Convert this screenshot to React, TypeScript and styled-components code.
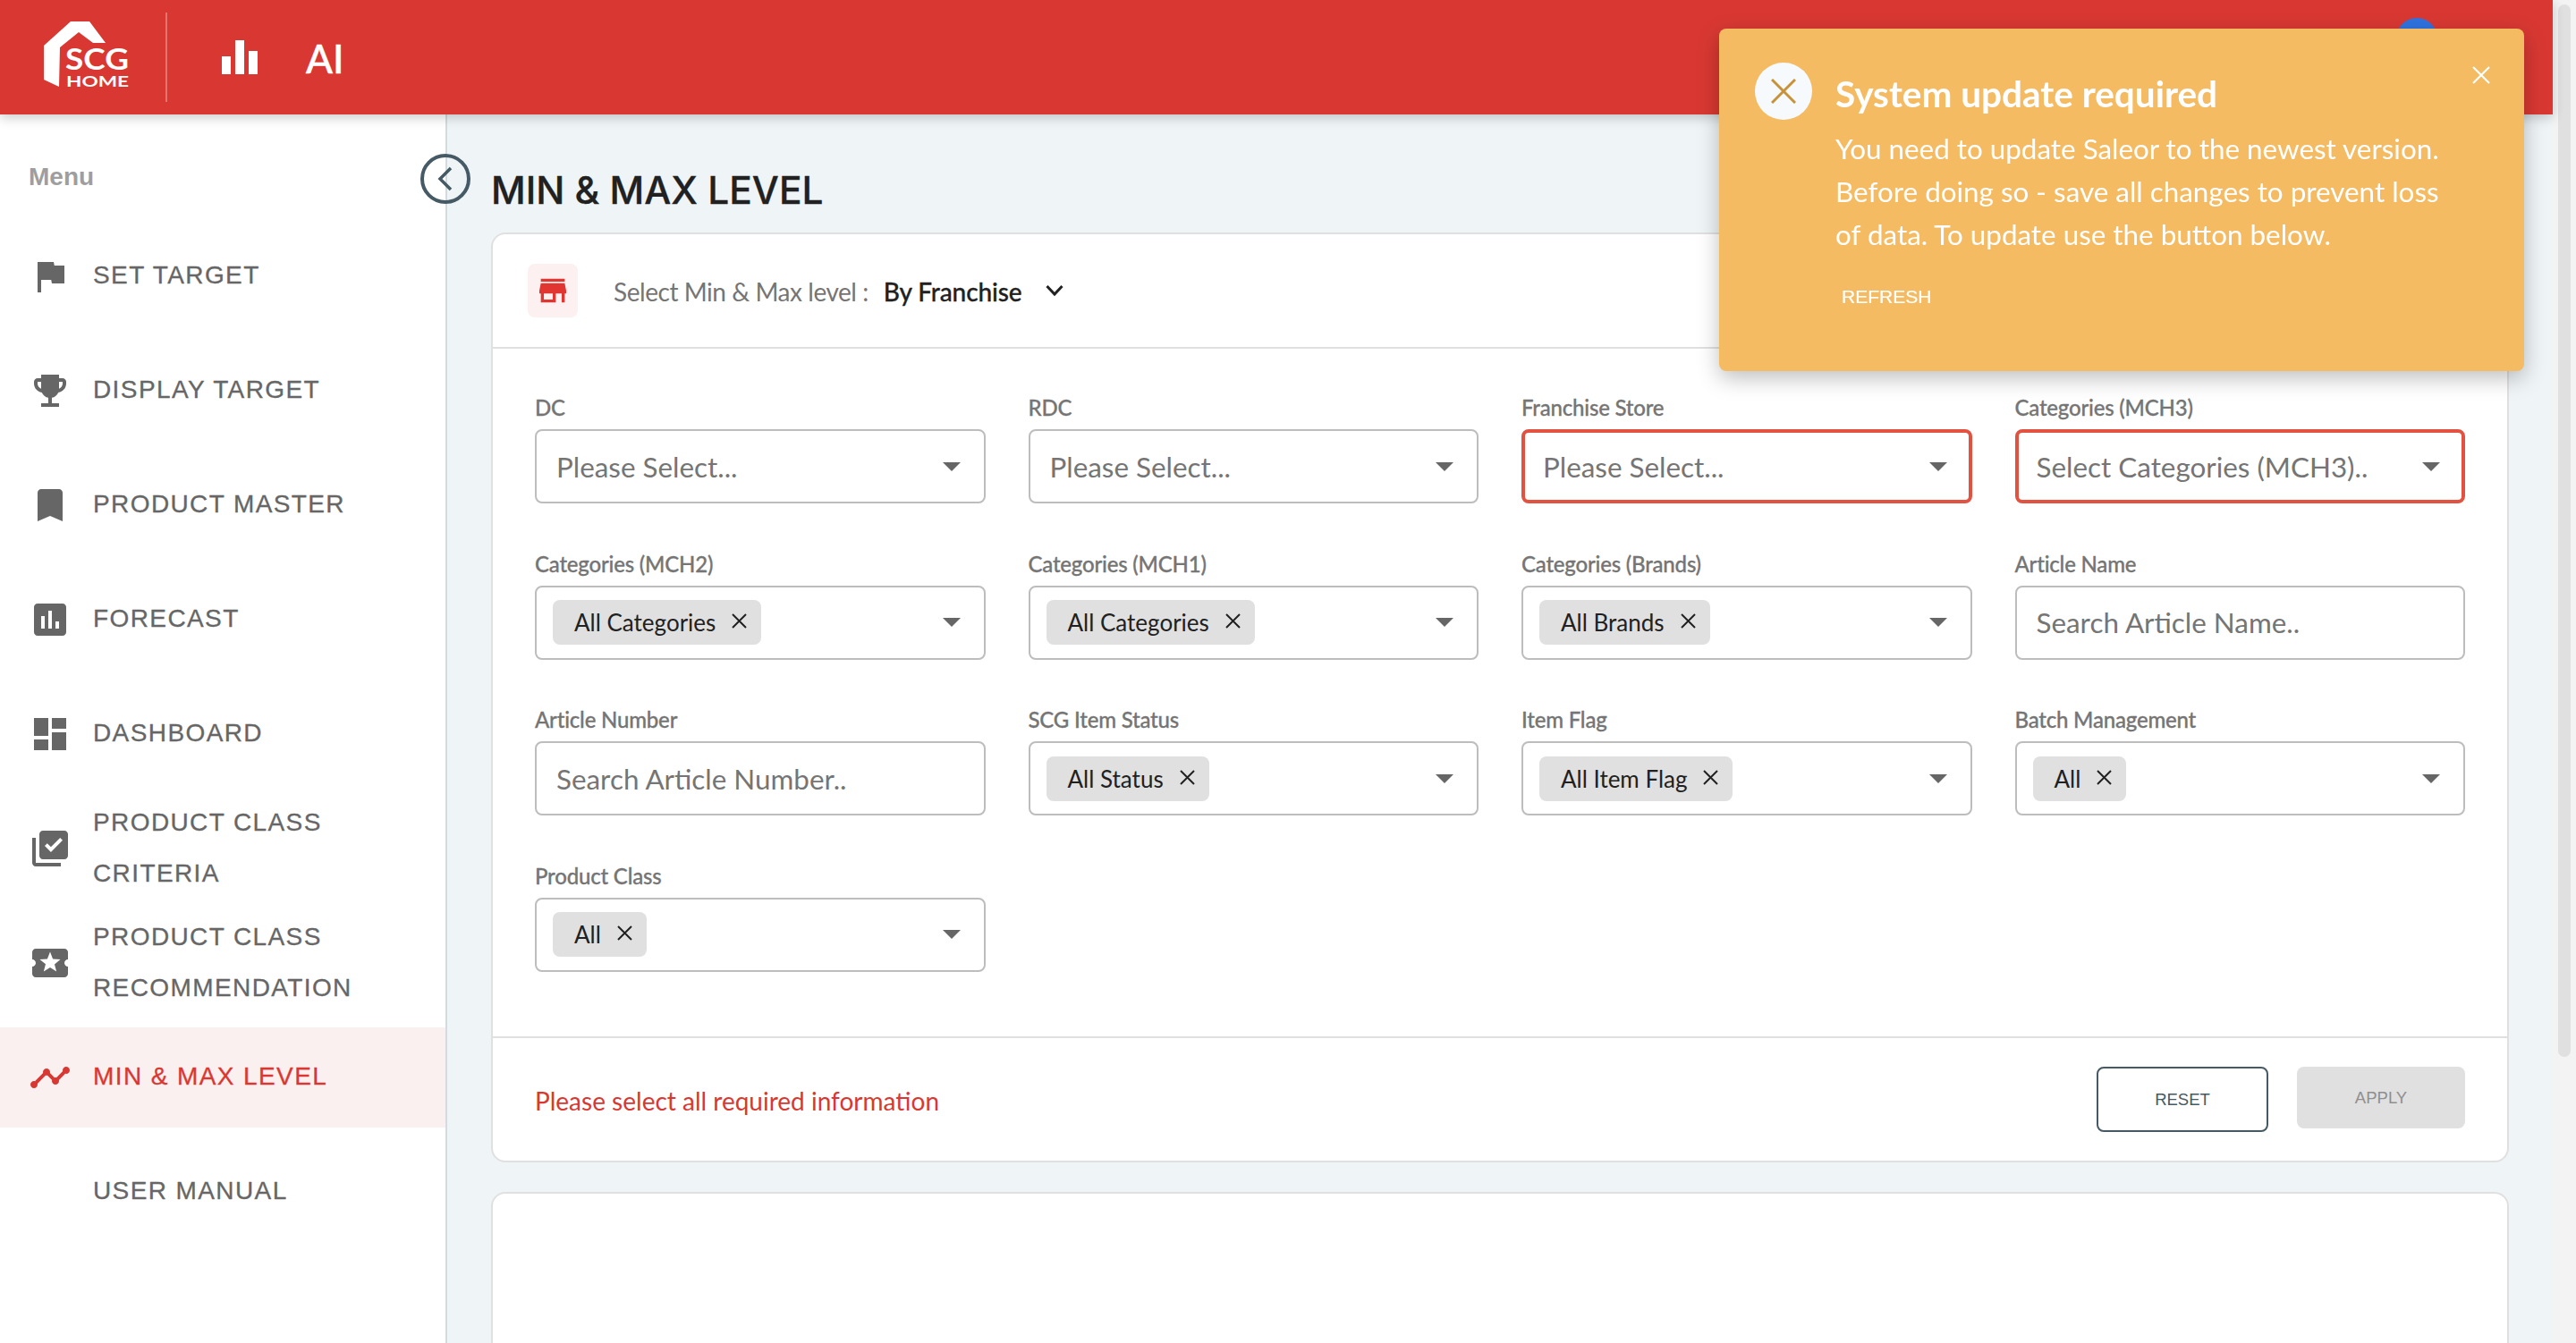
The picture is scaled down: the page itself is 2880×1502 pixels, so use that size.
import React from "react";
import styled, { createGlobalStyle } from "styled-components";

const GlobalStyle = createGlobalStyle`
  html, body { margin: 0; padding: 0; height: 100%; overflow: hidden; background: #f3f3f3; }
  #root { height: 100%; }
  * { box-sizing: border-box; }
`;

const BODY_FONT = `Lato, "Noto Sans", sans-serif`;
const MENU_FONT = `"Liberation Sans", Arial, sans-serif`;

const Page = styled.div`
  display: flex;
  height: 1502px;
  width: 2880px;
  overflow: hidden;
`;
const Shell = styled.div`
  width: 2854px;
  height: 100%;
  display: flex;
  flex-direction: column;
  background: #eff4f7;
`;
const ScrollTrack = styled.div`
  flex: 1;
  background: #f3f3f3;
  padding: 5px 6px 0;
`;
const ScrollThumb = styled.div`
  width: 14px;
  height: 1177px;
  border-radius: 7px;
  background: #e0e0e0;
`;
const Header = styled.header`
  flex: none;
  height: 128px;
  background: #d93832;
  box-shadow: 0 4px 12px rgba(0, 0, 0, 0.2);
  display: flex;
  align-items: center;
  padding: 0 129px 0 49px;
  position: relative;
  z-index: 2;
`;
const Logo = styled.svg`
  width: 95px;
  height: 80px;
  display: block;
  flex: none;
`;
const HeaderDivider = styled.div`
  width: 2px;
  height: 100px;
  background: rgba(255, 255, 255, 0.3);
  margin: 0 61px 0 41px;
  flex: none;
`;
const BarsIcon = styled.svg`
  width: 40px;
  height: 38px;
  flex: none;
  display: block;
  margin-right: 54px;
`;
const AiLabel = styled.span`
  font: 500 44px/1 ${BODY_FONT};
  color: #fff;
  margin-top: 2px;
  -webkit-text-stroke: 0.5px #fff;
`;
const Avatar = styled.div`
  margin-left: auto;
  align-self: flex-start;
  margin-top: 20px;
  width: 46px;
  height: 46px;
  border-radius: 50%;
  background: #2f73e0;
`;
const Body = styled.div`
  flex: 1;
  min-height: 0;
  display: flex;
  position: relative;
`;
const Sidebar = styled.nav`
  width: 500px;
  flex: none;
  background: #fff;
  border-right: 2px solid #d4dadd;
  padding-top: 49px;
`;
const MenuTitle = styled.div`
  font: 700 28px/42px ${MENU_FONT};
  color: #9e9e9e;
  padding-left: 32px;
  margin-bottom: 34px;
`;
const NavList = styled.div`
  display: flex;
  flex-direction: column;
  gap: 16px;
`;
const NavItem = styled.div<{ $active?: boolean }>`
  height: 112px;
  display: flex;
  align-items: center;
  gap: 24px;
  padding-left: 32px;
  background: ${(p) => (p.$active ? "#fbf0f0" : "transparent")};
  color: ${(p) => (p.$active ? "#d93832" : "#666666")};
`;
const NavIconBox = styled.svg`
  width: 48px;
  height: 48px;
  flex: none;
  fill: currentColor;
  display: block;
`;
const NavIconSpacer = styled.div`
  width: 48px;
  height: 48px;
  flex: none;
`;
const NavLabel = styled.div`
  font: 400 28px/57px ${MENU_FONT};
  letter-spacing: 1.4px;
  margin-top: -3px;
  -webkit-text-stroke: 0.3px currentColor;
`;
const CollapseButton = styled.div`
  position: absolute;
  left: 470px;
  top: 44px;
  width: 56px;
  height: 56px;
  border: 4px solid #455a64;
  border-radius: 50%;
  display: flex;
  align-items: center;
  justify-content: center;
`;
const Main = styled.main`
  flex: 1;
  min-width: 0;
  padding: 58px 49px 0 49px;
`;
const Title = styled.h1`
  margin: 0 0 22px;
  height: 52px;
  font: 500 42.4px/54px Inter, "Noto Sans", sans-serif;
  color: #212121;
  -webkit-text-stroke: 0.3px #212121;
`;
const Card = styled.section`
  background: #fff;
  border: 2px solid #e0e0e0;
  border-radius: 16px;
`;
const EmptyCard = styled(Card)`
  margin-top: 33px;
  height: 400px;
`;
const CardHead = styled.div`
  height: 128px;
  display: flex;
  align-items: center;
  padding-left: 39px;
  border-bottom: 2px solid #e0e0e0;
`;
const StoreBadge = styled.div`
  width: 56px;
  height: 60px;
  border-radius: 8px;
  background: #fcf0f0;
  color: #e03530;
  display: flex;
  align-items: center;
  justify-content: center;
  margin-right: 40px;
`;
const StoreIcon = styled.svg`
  width: 40px;
  height: 40px;
  fill: currentColor;
  display: block;
`;
const ModeLabel = styled.span`
  font: 400 28px/40px ${BODY_FONT};
  letter-spacing: -0.45px;
  color: #757575;
  margin: 2px 17px 0 0;
`;
const ModeValue = styled.span`
  font: 500 28px/40px ${BODY_FONT};
  letter-spacing: -0.1px;
  color: #212121;
  margin: 2px 26px 0 0;
  -webkit-text-stroke: 0.3px #212121;
`;
const FormGrid = styled.div`
  display: grid;
  grid-template-columns: repeat(4, 503.5px);
  column-gap: 48px;
  row-gap: 49.5px;
  padding: 48px 47px 72px;
`;
const Field = styled.div`
  display: flex;
  flex-direction: column;
`;
const FieldLabel = styled.label`
  font: 500 24px/36px ${BODY_FONT};
  letter-spacing: -0.2px;
  color: #757575;
  margin-bottom: 6px;
  -webkit-text-stroke: 0.3px #757575;
`;
const Control = styled.div<{ $error?: boolean }>`
  height: 83px;
  border-radius: 8px;
  border: ${(p) => (p.$error ? "4px solid #e35141" : "2px solid #bdbdbd")};
  padding-left: ${(p) => (p.$error ? "20px" : "22px")};
  padding-right: ${(p) => (p.$error ? "24px" : "26px")};
  display: flex;
  align-items: center;
  justify-content: space-between;
  background: #fff;
`;
const TagControl = styled(Control)`
  padding-left: 18px;
`;
const Placeholder = styled.span`
  font: 400 31.4px/40px ${BODY_FONT};
  color: #757575;
`;
const SearchInput = styled.input`
  width: 100%;
  height: 100%;
  border: 0;
  outline: 0;
  padding: 0;
  background: transparent;
  font: 400 31.4px/40px ${BODY_FONT};
  color: #757575;
  &::placeholder { color: #757575; opacity: 1; }
`;
const Caret = styled.div`
  width: 0;
  height: 0;
  flex: none;
  border-left: 10px solid transparent;
  border-right: 10px solid transparent;
  border-top: 10px solid #666666;
`;
const Tag = styled.div`
  height: 50px;
  display: flex;
  align-items: center;
  gap: 18px;
  padding: 0 16px 0 24px;
  background: #e0e0e0;
  border-radius: 8px;
  font: 400 26px/50px ${BODY_FONT};
  color: #212121;
`;
const TagClose = styled.svg`
  width: 17px;
  height: 17px;
  display: block;
  margin-top: -3px;
`;
const CardFoot = styled.div`
  border-top: 2px solid #e0e0e0;
  height: 139px;
  padding: 32px 47px 0;
  display: flex;
  align-items: flex-start;
  justify-content: space-between;
`;
const ErrorText = styled.div`
  font: 400 28px/40px ${BODY_FONT};
  color: #d93832;
  margin-top: 18px;
`;
const Actions = styled.div`
  display: flex;
  align-items: flex-start;
  gap: 32px;
`;
const ResetButton = styled.button`
  width: 192px;
  height: 73px;
  background: #fff;
  border: 2px solid #455a64;
  border-radius: 8px;
  font: 400 18.5px/1 ${MENU_FONT};
  color: #455a64;
  padding: 2px 0 0;
`;
const ApplyButton = styled.button`
  width: 188px;
  height: 69px;
  background: #e0e0e0;
  border: 0;
  border-radius: 8px;
  font: 400 18.5px/1 ${MENU_FONT};
  color: #8f8f8f;
  padding: 2px 0 0;
`;
const Toast = styled.aside`
  position: fixed;
  left: 1922px;
  top: 32px;
  width: 900px;
  height: 383px;
  z-index: 5;
  background: #f4bb62;
  border-radius: 8px;
  box-shadow: 0 8px 24px rgba(0, 0, 0, 0.25);
  display: flex;
  gap: 26px;
  padding: 38px 0 0 40px;
  color: #fff;
`;
const ToastIcon = styled.div`
  width: 64px;
  height: 64px;
  flex: none;
  border-radius: 50%;
  background: #f7fafc;
  display: flex;
  align-items: center;
  justify-content: center;
`;
const ToastContent = styled.div`
  padding-top: 11px;
`;
const ToastTitle = styled.div`
  font: 700 40.5px/48px ${BODY_FONT};
  margin-bottom: 13px;
`;
const ToastText = styled.div`
  font: 400 31.4px/48px ${BODY_FONT};
  width: 720px;
`;
const RefreshLink = styled.div`
  font: 400 21px/30px ${MENU_FONT};
  margin: 31px 0 0 7px;
  -webkit-text-stroke: 0.2px #fff;
`;
const ToastClose = styled.svg`
  position: absolute;
  right: 38px;
  top: 42px;
  width: 20px;
  height: 20px;
  display: block;
`;

const navItems = [
  { label: ["SET TARGET"], d: "M14.4 6L14 4H5v17h2v-7h5.6l.4 2h7V6z" },
  { label: ["DISPLAY TARGET"], d: "M19 5h-2V3H7v2H5c-1.1 0-2 .9-2 2v1c0 2.55 1.92 4.63 4.39 4.94.63 1.5 1.98 2.63 3.61 2.96V19H7v2h10v-2h-4v-3.1c1.63-.33 2.98-1.46 3.61-2.96C19.08 12.63 21 10.55 21 8V7c0-1.1-.9-2-2-2zM5 8V7h2v3.82C5.84 10.4 5 9.3 5 8zm14 0c0 1.3-.84 2.4-2 2.82V7h2v1z" },
  { label: ["PRODUCT MASTER"], d: "M17 3H7c-1.1 0-1.99.9-1.99 2L5 21l7-3 7 3V5c0-1.1-.9-2-2-2z" },
  { label: ["FORECAST"], d: "M19 3H5c-1.1 0-2 .9-2 2v14c0 1.1.9 2 2 2h14c1.1 0 2-.9 2-2V5c0-1.1-.9-2-2-2zM9 17H7v-7h2v7zm4 0h-2V7h2v10zm4 0h-2v-4h2v4z" },
  { label: ["DASHBOARD"], d: "M3 13h8V3H3v10zm0 8h8v-6H3v6zm10 0h8V11h-8v10zm0-18v6h8V3h-8z" },
  { label: ["PRODUCT CLASS", "CRITERIA"], d: "M4 6H2v14c0 1.1.9 2 2 2h14v-2H4V6zm16-4H8c-1.1 0-2 .9-2 2v12c0 1.1.9 2 2 2h12c1.1 0 2-.9 2-2V4c0-1.1-.9-2-2-2zm-7.53 12L9 10.5l1.4-1.41 2.07 2.08L17.6 6 19 7.41 12.47 14z" },
  { label: ["PRODUCT CLASS", "RECOMMENDATION"], d: "M20 12c0-1.1.9-2 2-2V6c0-1.1-.9-2-2-2H4c-1.1 0-1.99.9-1.99 2v4c1.1 0 1.99.9 1.99 2s-.89 2-2 2v4c0 1.1.9 2 2 2h16c1.1 0 2-.9 2-2v-4c-1.1 0-2-.9-2-2zm-4.42 4.8L12 14.5l-3.58 2.3 1.08-4.12-3.29-2.69 4.24-.25L12 5.8l1.54 3.95 4.24.25-3.29 2.69 1.09 4.11z" },
  { label: ["MIN & MAX LEVEL"], active: true, d: "M23 8c0 1.1-.9 2-2 2-.18 0-.35-.02-.51-.07l-3.56 3.55c.05.16.07.34.07.52 0 1.1-.9 2-2 2s-2-.9-2-2c0-.18.02-.36.07-.52l-2.55-2.55c-.16.05-.34.07-.52.07s-.36-.02-.52-.07l-4.55 4.56c.05.16.07.33.07.51 0 1.1-.9 2-2 2s-2-.9-2-2 .9-2 2-2c.18 0 .35.02.51.07l4.56-4.55C8.02 9.36 8 9.18 8 9c0-1.1.9-2 2-2s2 .9 2 2c0 .18-.02.36-.07.52l2.55 2.55c.16-.05.34-.07.52-.07s.36.02.52.07l3.55-3.56C19.02 8.35 19 8.18 19 8c0-1.1.9-2 2-2s2 .9 2 2z" },
  { label: ["USER MANUAL"] },
];

type FieldDef = { label: string; placeholder?: string; tag?: string; search?: string; error?: boolean };
const fields: FieldDef[] = [
  { label: "DC", placeholder: "Please Select..." },
  { label: "RDC", placeholder: "Please Select..." },
  { label: "Franchise Store", placeholder: "Please Select...", error: true },
  { label: "Categories (MCH3)", placeholder: "Select Categories (MCH3)..", error: true },
  { label: "Categories (MCH2)", tag: "All Categories" },
  { label: "Categories (MCH1)", tag: "All Categories" },
  { label: "Categories (Brands)", tag: "All Brands" },
  { label: "Article Name", search: "Search Article Name.." },
  { label: "Article Number", search: "Search Article Number.." },
  { label: "SCG Item Status", tag: "All Status" },
  { label: "Item Flag", tag: "All Item Flag" },
  { label: "Batch Management", tag: "All" },
  { label: "Product Class", tag: "All" },
];

function FieldControl({ f }: { f: FieldDef }) {
  if (f.search) {
    return (
      <Control>
        <SearchInput placeholder={f.search} readOnly />
      </Control>
    );
  }
  if (f.tag) {
    return (
      <TagControl>
        <Tag>
          {f.tag}
          <TagClose viewBox="0 0 17 17">
            <path d="M1 1L16 16M16 1L1 16" stroke="#212121" strokeWidth="2" fill="none" />
          </TagClose>
        </Tag>
        <Caret />
      </TagControl>
    );
  }
  return (
    <Control $error={f.error}>
      <Placeholder>{f.placeholder}</Placeholder>
      <Caret />
    </Control>
  );
}

export default function App() {
  return (
    <>
      <GlobalStyle />
      <Page>
        <Shell>
          <Header>
            <Logo viewBox="0 0 95 80">
              <polygon points="0,27 30,0 51,0 69,24 55,24 39,12 18,29 17,73 0,65" fill="#fff" />
              <text x="24" y="54" fill="#fff" fontFamily="Lato, sans-serif" fontSize="33" fontWeight="700" textLength="71" lengthAdjust="spacingAndGlyphs">SCG</text>
              <text x="25" y="73" fill="#fff" fontFamily="Lato, sans-serif" fontSize="17" fontWeight="700" textLength="70" lengthAdjust="spacingAndGlyphs">HOME</text>
            </Logo>
            <HeaderDivider />
            <BarsIcon viewBox="0 0 40 38">
              <path d="M0 18h10v20H0zM15 0h10v38H15zM30 12h10v26H30z" fill="#fff" />
            </BarsIcon>
            <AiLabel>AI</AiLabel>
            <Avatar />
          </Header>
          <Body>
            <Sidebar>
              <MenuTitle>Menu</MenuTitle>
              <NavList>
                {navItems.map((item) => (
                  <NavItem key={item.label.join(" ")} $active={item.active}>
                    {item.d ? (
                      <NavIconBox viewBox="0 0 24 24">
                        <path d={item.d} />
                      </NavIconBox>
                    ) : (
                      <NavIconSpacer />
                    )}
                    <NavLabel>
                      {item.label.map((l) => (
                        <div key={l}>{l}</div>
                      ))}
                    </NavLabel>
                  </NavItem>
                ))}
              </NavList>
            </Sidebar>
            <CollapseButton>
              <svg width="18" height="28" viewBox="0 0 18 28">
                <path d="M15 2L3 14L15 26" stroke="#455a64" strokeWidth="3.5" fill="none" />
              </svg>
            </CollapseButton>
            <Main>
              <Title>MIN &amp; MAX LEVEL</Title>
              <Card>
                <CardHead>
                  <StoreBadge>
                    <StoreIcon viewBox="0 0 24 24">
                      <path d="M20 4H4v2h16V4zm1 10v-2l-1-5H4l-1 5v2h1v6h10v-6h4v6h2v-6h1zm-9 4H6v-4h6v4z" />
                    </StoreIcon>
                  </StoreBadge>
                  <ModeLabel>Select Min &amp; Max level :</ModeLabel>
                  <ModeValue>By Franchise</ModeValue>
                  <svg width="20" height="14" viewBox="0 0 20 14">
                    <path d="M1.5 2L10 11L18.5 2" stroke="#212121" strokeWidth="3" fill="none" />
                  </svg>
                </CardHead>
                <FormGrid>
                  {fields.map((f) => (
                    <Field key={f.label}>
                      <FieldLabel>{f.label}</FieldLabel>
                      <FieldControl f={f} />
                    </Field>
                  ))}
                </FormGrid>
                <CardFoot>
                  <ErrorText>Please select all required information</ErrorText>
                  <Actions>
                    <ResetButton>RESET</ResetButton>
                    <ApplyButton>APPLY</ApplyButton>
                  </Actions>
                </CardFoot>
              </Card>
              <EmptyCard />
            </Main>
          </Body>
        </Shell>
        <ScrollTrack>
          <ScrollThumb />
        </ScrollTrack>
      </Page>
      <Toast>
        <ToastIcon>
          <svg width="28" height="28" viewBox="0 0 28 28">
            <path d="M1 1L27 27M27 1L1 27" stroke="#c8923a" strokeWidth="3" fill="none" />
          </svg>
        </ToastIcon>
        <ToastContent>
          <ToastTitle>System update required</ToastTitle>
          <ToastText>
            You need to update Saleor to the newest version.
            <br />
            Before doing so - save all changes to prevent loss
            <br />
            of data. To update use the button below.
          </ToastText>
          <RefreshLink>REFRESH</RefreshLink>
        </ToastContent>
        <ToastClose viewBox="0 0 20 20">
          <path d="M1 1L19 19M19 1L1 19" stroke="#fff" strokeWidth="2.2" fill="none" />
        </ToastClose>
      </Toast>
    </>
  );
}
